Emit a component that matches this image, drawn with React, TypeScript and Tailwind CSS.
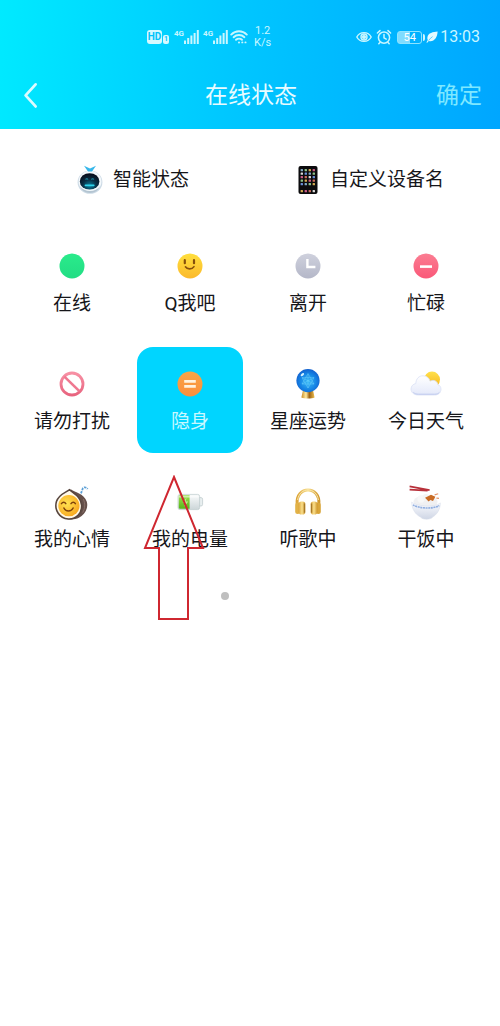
import type { ReactNode } from 'react';
import { useState } from 'react';
import clsx from 'clsx';

const fontClass = "font-[Roboto,'Noto_Sans_CJK_SC',sans-serif]";

function SignalBars() {
    return (
        <svg viewBox="0 0 15 14" className="w-[15px] h-[14px]" fill="currentColor">
            <rect x="0" y="10.5" width="2" height="3.5" />
            <rect x="3.2" y="8" width="2" height="6" />
            <rect x="6.4" y="5.5" width="2" height="8.5" />
            <rect x="9.6" y="3" width="2" height="11" />
            <rect x="12.8" y="0" width="2" height="14" />
        </svg>
    );
}

function Signal() {
    return (
        <div className="flex items-end">
            <span className="self-start text-[8px] leading-[8px] font-bold">4G</span>
            <SignalBars />
        </div>
    );
}

function StatusBar() {
    return (
        <div className="flex items-center justify-between h-[50px] pl-[147px] pr-5 text-[#c9f6ff]">
            <div className="flex items-center">
                <span className="w-[15px] rounded-[3px] bg-[#d6f9ff] text-[#00c3fb] text-[10px] leading-[14px] font-bold text-center">HD</span>
                <span className="ml-px mt-1 w-[6px] rounded-[2px] bg-[#d6f9ff] text-[#00c3fb] text-[7px] leading-[9px] font-bold text-center">1</span>
                <div className="flex items-center gap-1 ml-[5px]">
                    <Signal />
                    <Signal />
                </div>
                <svg viewBox="0 0 18 16" className="w-[18px] h-4 ml-0.5" fill="none" stroke="currentColor" strokeWidth="1.9" strokeLinecap="round">
                    <path d="M1.2 5.6C5.6 1.2 12.4 1.2 16.8 5.6" />
                    <path d="M3.6 8.2c3-2.9 7.8-2.9 10.8 0" />
                    <path d="M6 10.8c1.7-1.6 4.3-1.6 6 0" />
                    <circle cx="9" cy="13.4" r="1" fill="currentColor" stroke="none" />
                    <path d="M12.2 13.4h.2M15.4 13.4h.2" />
                </svg>
                <div className="ml-1.5 text-[11px] leading-3 text-center">
                    <div>1.2</div>
                    <div>K/s</div>
                </div>
            </div>
            <div className="flex items-center">
                <svg viewBox="0 0 16 12" className="w-4 h-3" fill="none" stroke="currentColor" strokeWidth="1.4">
                    <path d="M.8 6C3.8.2 12.2.2 15.2 6 12.2 11.8 3.8 11.8.8 6Z" />
                    <circle cx="8" cy="6" r="3" />
                    <circle cx="8" cy="6" r="1.4" fill="currentColor" />
                </svg>
                <svg viewBox="0 0 16 16" className="w-4 h-4 ml-1" fill="none" stroke="currentColor" strokeWidth="1.5" strokeLinecap="round">
                    <circle cx="8" cy="8.6" r="5.6" />
                    <path d="M8 5.6v3.2l2.2 1.4M1.4 4 4 1.6M14.6 4 12 1.6M4 13.4l-1.2 1.4M12 13.4l1.2 1.4" />
                </svg>
                <div className="flex items-center ml-[5px]">
                    <span className="w-[25px] border border-[#8ee4ff] rounded-[3px] bg-linear-to-r from-[#7fdcff] from-54% to-transparent to-54% text-[11px] leading-[11px] text-center text-white">54</span>
                    <span className="w-0.5 h-[7px] ml-px rounded-r-sm bg-current" />
                </div>
                <svg viewBox="0 0 12 12" className="w-3 h-3 ml-px mr-0.5" fill="#e2faff">
                    <path d="M11.6.6C7 .8 2.2 2.2 1.4 6.200c-.2 1 0 2 .4 2.800L.4 11.400l.8.4L2.800 10c4.800 1.400 8.600-2.800 8.800-9.400Z" />
                    <path d="M2.600 9.600C3.800 7.800 5 6.600 6.600 5.600" stroke="#0db2fb" strokeWidth=".6" fill="none" />
                </svg>
                <span className="text-base leading-5">13:03</span>
            </div>
        </div>
    );
}

function RobotIcon() {
    return (
        <svg viewBox="0 0 26 30" className="w-[26px] h-[30px]">
            <defs>
                <radialGradient id="robotScreen" cx=".5" cy=".75" r=".7">
                    <stop offset="0" stopColor="#0b7f9c" />
                    <stop offset=".5" stopColor="#092f45" />
                    <stop offset="1" stopColor="#070d1c" />
                </radialGradient>
            </defs>
            <ellipse cx="13" cy="17.2" rx="12.400" ry="11.600" fill="#cddbe6" />
            <ellipse cx="13" cy="16.400" rx="11.400" ry="10.600" fill="#f3f8fb" />
            <path d="M3 21c4 6.600 16 6.600 20 0-3 9.200-17 9.200-20 0Z" fill="#b3c4d1" />
            <ellipse cx="12.600" cy="16.400" rx="9.800" ry="8.200" fill="url(#robotScreen)" />
            <path d="M8.600 14.600c.6-1.200 1.800-1.200 2.400 0M14.400 14.600c.6-1.200 1.800-1.200 2.400 0" stroke="#1c8fa8" strokeWidth="1.100" fill="none" />
            <path d="M8.400 20.400h8.400" stroke="#2fd3ea" strokeWidth="1.600" strokeLinecap="round" />
            <path d="M7 .8 13 3.400 19 .8 15 6.600h-4Z" fill="#37b7ea" />
        </svg>
    );
}

function PhoneIcon() {
    const colors = ['#7fa7c4', '#c86b5b', '#8fc28a', '#d8d8d8', '#d2a950', '#6a8fd8', '#c95a86'];
    return (
        <svg viewBox="0 0 20 30" className="w-5 h-[30px]">
            <rect x=".5" y="1" width="19" height="28" rx="2" fill="#0b0b0d" />
            {[0, 1, 2, 3, 4, 6].map((row) =>
                [0, 1, 2, 3].map((col) => (
                    <rect
                        key={`${row}-${col}`}
                        x={2.6 + col * 4}
                        y={4 + row * 3.5}
                        width="2.4"
                        height="2.2"
                        rx=".5"
                        fill={colors[(row * 3 + col * 2) % colors.length]}
                    />
                ))
            )}
        </svg>
    );
}

function Icon({ children }: { children: ReactNode }) {
    return (
        <svg viewBox="0 0 40 40" className="w-10 h-10" fill="none">
            {children}
        </svg>
    );
}

function Gradient({ id, from, to }: { id: string; from: string; to: string }) {
    return (
        <linearGradient id={id} x1="0" y1="0" x2="0" y2="1">
            <stop offset="0" stopColor={from} />
            <stop offset="1" stopColor={to} />
        </linearGradient>
    );
}

const OnlineIcon = (
    <Icon>
        <Gradient id="online" from="#2aeb8b" to="#22dd84" />
        <circle cx="20" cy="20" r="12.5" fill="url(#online)" />
    </Icon>
);

const SmileIcon = (
    <Icon>
        <Gradient id="smile" from="#ffdf3d" to="#fbb92c" />
        <circle cx="20" cy="20" r="12.5" fill="url(#smile)" />
        <path d="M14.800 14.200v3M24 14.200v3" stroke="#85500c" strokeWidth="2.200" strokeLinecap="round" />
        <path d="M15.400 20.800c1.800 2.800 6.600 2.800 8.600-.2" stroke="#85500c" strokeWidth="1.600" strokeLinecap="round" />
    </Icon>
);

const AwayIcon = (
    <Icon>
        <Gradient id="away" from="#cfd1dd" to="#b4b7c8" />
        <circle cx="20" cy="20" r="12.500" fill="url(#away)" />
        <path d="M19.400 13v8H27.400" stroke="#fff" strokeWidth="2.400" />
    </Icon>
);

const BusyIcon = (
    <Icon>
        <Gradient id="busy" from="#fb7d92" to="#fa5878" />
        <circle cx="20" cy="20" r="12.500" fill="url(#busy)" />
        <path d="M14 20.600h12" stroke="#fff" strokeWidth="2.600" />
    </Icon>
);

const NoDisturbIcon = (
    <Icon>
        <Gradient id="disturb" from="#f790a4" to="#e8647f" />
        <circle cx="20" cy="20" r="11" stroke="url(#disturb)" strokeWidth="2.800" />
        <path d="M12.400 12.600 27.600 27.400" stroke="#ef7890" strokeWidth="2.600" />
    </Icon>
);

const InvisibleIcon = (
    <Icon>
        <Gradient id="invisible" from="#f9a545" to="#fb8f3d" />
        <circle cx="20" cy="20" r="12.500" fill="url(#invisible)" />
        <path d="M14.200 17.400h11.600M14.200 22.400h11.600" stroke="#fff3df" strokeWidth="2.600" />
    </Icon>
);

const CrystalIcon = (
    <Icon>
        <defs>
            <radialGradient id="crystal" cx=".5" cy=".55" r=".55">
                <stop offset="0" stopColor="#39b8f6" />
                <stop offset=".6" stopColor="#1687e6" />
                <stop offset="1" stopColor="#1260cf" />
            </radialGradient>
            <linearGradient id="crystalBase" x1="0" y1="0" x2="1" y2="0">
                <stop offset="0" stopColor="#c98b22" />
                <stop offset=".35" stopColor="#ffe9a0" />
                <stop offset=".6" stopColor="#9c6214" />
                <stop offset="1" stopColor="#f0c04e" />
            </linearGradient>
        </defs>
        <path d="M15 26h10l1.600 7.400c-3 1.400-10.200 1.400-13.200 0Z" fill="url(#crystalBase)" />
        <circle cx="20" cy="16.600" r="11.600" fill="url(#crystal)" />
        <path d="M20 9.600 26 20h-12ZM20 24l-6-10.400h12ZM20 9.600V24M14 13.600l12 6.400M26 13.600 14 20" stroke="#7fdcff" strokeWidth=".6" opacity=".6" />
        <ellipse cx="14.400" cy="10.600" rx="2" ry="1.200" transform="rotate(-40 14.400 10.600)" fill="#d4f2ff" />
    </Icon>
);

const WeatherIcon = (
    <Icon>
        <Gradient id="sun" from="#ffe04a" to="#f7b51b" />
        <Gradient id="cloud" from="#ffffff" to="#e4e9fa" />
        <circle cx="26" cy="15.600" r="8" fill="url(#sun)" />
        <path
            d="M12.200 31C7.800 31 5 28.400 5 25c0-3 2.200-5 4.800-5.400C10 14.600 13 11.800 17 11.800c3.600 0 6.200 2 7 5.400 1-.6 2-.8 3-.8 2.800 0 4.600 1.800 4.800 4.200 2 .6 3.200 2.400 3.200 4.600 0 3.400-2.600 5.800-6.200 5.800Z"
            fill="url(#cloud)"
            stroke="#dbe1f5"
            strokeWidth=".8"
        />
        <path d="M7.400 28.400c1.400 1.400 3 1.800 5 1.800h16.400c2 0 3.600-.6 4.600-1.800" stroke="#bfcaee" strokeWidth="1" />
    </Icon>
);

const MoodIcon = (
    <Icon>
        <defs>
            <radialGradient id="mood" cx=".4" cy=".4" r=".7">
                <stop offset="0" stopColor="#ffe352" />
                <stop offset="1" stopColor="#f8a31c" />
            </radialGradient>
        </defs>
        <g transform="translate(-2 2.500) scale(1.040)">
            <path d="M20 4.600c3 2.600 13 4 15.400 12 1.800 6.600-2.200 12.400-7.600 15.400-3.600 1.800-9 2.200-13.400.6Z" fill="#65504b" />
            <path d="M32 14c2 4.200 1.800 9-.6 13" stroke="#8b746b" strokeWidth=".9" />
            <path d="M18.600 5c-2.400 2.400-10 4-12.400 11.400C4 24 8.600 32.600 17.600 33.200c8.200.4 13.200-6 12.800-13.400C30 12 23 8.800 18.600 5Z" fill="#fff8e7" stroke="#58463f" strokeWidth="1.500" />
            <circle cx="18.200" cy="20.400" r="10.200" fill="url(#mood)" />
            <path d="M11 18.400c1.200-1.800 3.200-1.800 4.200 0M20.200 18.400c1.200-1.800 3.200-1.800 4.200 0M13.400 22.600c1.600 3.800 7 3.800 8.800 0" stroke="#80430b" strokeWidth="1.400" strokeLinecap="round" />
        </g>
        <path d="m29 11.400 1.800-5c1-1.400 3-1.600 4.800.6" stroke="#5b9fd6" strokeWidth="1.800" strokeDasharray="2.400 1" />
    </Icon>
);

const BatteryIcon = (
    <Icon>
        <Gradient id="charge" from="#9de04b" to="#55b81b" />
        <Gradient id="shell" from="#fafcfc" to="#ccd6d8" />
        <rect x="28" y="15.600" width="4.600" height="8.400" rx="1.600" fill="#e9eff0" stroke="#bcc8ca" strokeWidth=".7" />
        <rect x="8" y="12.400" width="21.600" height="15.200" rx="2" fill="url(#shell)" stroke="#bccacb" strokeWidth=".7" />
        <path d="M10 13.200h9.600v13.600H10c-.8 0-1.200-.4-1.200-1.200V14.400c0-.8.4-1.200 1.200-1.200Z" fill="url(#charge)" />
        <path d="M9 14.800h19.600" stroke="#fff" strokeWidth="1.400" opacity=".6" />
        <path d="m16.600 15.400-4 5h2.600l-1 4.400 4-5.400h-2.600Z" fill="#c5ec94" />
    </Icon>
);

const MusicIcon = (
    <Icon>
        <defs>
            <linearGradient id="gold" x1="0" y1="0" x2="1" y2="0">
                <stop offset="0" stopColor="#dca439" />
                <stop offset=".5" stopColor="#f9df8c" />
                <stop offset="1" stopColor="#cf962b" />
            </linearGradient>
        </defs>
        <path d="M9.200 22C7.400 3.200 32.600 3.200 30.800 22" stroke="url(#gold)" strokeWidth="3" />
        <path d="M9.600 18c2-13.400 18.800-13.400 20.800 0" stroke="#f8e6ae" strokeWidth="1" />
        <rect x="7.200" y="20.400" width="5" height="11.600" rx="2.500" fill="#e2b247" />
        <rect x="10.600" y="19.600" width="6.800" height="13" rx="2.800" fill="url(#gold)" />
        <path d="M16.400 21.400v9.400" stroke="#a87b28" strokeWidth="1.200" />
        <rect x="27.800" y="20.400" width="5" height="11.600" rx="2.500" fill="#d9a539" />
        <rect x="22.600" y="19.600" width="6.800" height="13" rx="2.800" fill="url(#gold)" />
        <path d="M23.600 21.400v9.400" stroke="#a87b28" strokeWidth="1.200" />
    </Icon>
);

const RiceIcon = (
    <Icon>
        <Gradient id="bowl" from="#fbfcff" to="#cfd6e5" />
        <g transform="translate(-1 2.500)">
            <ellipse cx="20.500" cy="17.400" rx="12" ry="6.600" fill="#f0f0f2" />
            <circle cx="16" cy="14.400" r="3.600" fill="#f7f7f7" />
            <circle cx="21" cy="12.800" r="3.400" fill="#f4f4f4" />
            <path d="M6.600 17.600c4 4 22.800 6 28.800.8-.2 7-3.600 11.600-7.800 14.200-.6 2.400-10.200 3-11.800.2C10.400 30 7 25 6.600 17.600Z" fill="url(#bowl)" stroke="#d5dbe8" strokeWidth=".5" />
            <path d="M8 20.400c5.600 3.600 20.400 4.400 26.200.6" stroke="#90aee0" strokeWidth="1.600" strokeDasharray="2 .6" />
            <path d="m20 13.200 6-3 4.400 2-2.400 4.400-2.600-1-1.800 1.400Z" fill="#c96b24" />
            <path d="m29.600 10.400 3.600-1.200M31.400 13.600l2.600.2" stroke="#e4956c" strokeWidth="1.200" />
        </g>
        <path d="m3.600 4.400 20 3.800M3.600 7.600l18 1" stroke="#b8303a" strokeWidth="1.800" />
    </Icon>
);

const statuses = [
    { label: '在线', icon: OnlineIcon },
    { label: 'Q我吧', icon: SmileIcon },
    { label: '离开', icon: AwayIcon },
    { label: '忙碌', icon: BusyIcon },
    { label: '请勿打扰', icon: NoDisturbIcon },
    { label: '隐身', icon: InvisibleIcon },
    { label: '星座运势', icon: CrystalIcon },
    { label: '今日天气', icon: WeatherIcon },
    { label: '我的心情', icon: MoodIcon },
    { label: '我的电量', icon: BatteryIcon, pointer: true },
    { label: '听歌中', icon: MusicIcon },
    { label: '干饭中', icon: RiceIcon },
];

// Red outline arrow pointing up at the tile above
function PointerArrow() {
    return (
        <svg viewBox="0 0 62 156" className="absolute left-[6px] top-[10px] w-[62px] h-[156px] pointer-events-none" fill="none">
            <path d="M31 2 60 73H45v71H16V73H2Z" stroke="#cf2730" strokeWidth="2" />
        </svg>
    );
}

export default function App() {
    const [selected, setSelected] = useState('隐身');

    return (
        <div className={clsx('min-h-screen bg-white text-[#16161a]', fontClass)}>
            <header className="pt-3 bg-linear-[95deg,#00eaff_0%,#00c6ff_48%,#00a6ff_100%]">
                <StatusBar />
                <div className="grid grid-cols-3 items-center h-[67px] pl-5 pr-[18px] text-[23px] leading-8 text-white">
                    <button type="button" aria-label="返回" className="justify-self-start">
                        <svg viewBox="0 0 20 28" className="w-5 h-7" fill="none" stroke="#dcfbff" strokeWidth="2.800" strokeLinecap="round" strokeLinejoin="round">
                            <path d="M15.600 2.400 5.600 13.400l10 11" />
                        </svg>
                    </button>
                    <h1 className="text-center text-[#e8fbff]">在线状态</h1>
                    <button type="button" className="justify-self-end text-[#7fe8ff]">确定</button>
                </div>
            </header>

            <main>
                <div className="grid grid-cols-2 h-[100px] pl-3.5 pr-2.5 pt-0.5 text-[19px] leading-6">
                    <button type="button" className="flex items-center justify-center gap-2.5">
                        <RobotIcon />
                        智能状态
                    </button>
                    <button type="button" className="flex items-center justify-center gap-3">
                        <PhoneIcon />
                        自定义设备名
                    </button>
                </div>

                <div className="grid grid-cols-4 gap-3 pl-[19px] pr-[21px]">
                    {statuses.map(({ label, icon, pointer }) => (
                        <div key={label} className="relative">
                            <button
                                type="button"
                                aria-pressed={selected === label}
                                onClick={() => setSelected(label)}
                                className={clsx(
                                    'flex flex-col items-center gap-1.5 w-full h-[106px] pt-[17px] rounded-2xl text-[19px] leading-6 whitespace-nowrap',
                                    selected === label && 'bg-[#00d5ff] text-[#c8f8ff]'
                                )}
                            >
                                {icon}
                                {label}
                            </button>
                            {pointer && <PointerArrow />}
                        </div>
                    ))}
                </div>

                <div className="flex justify-center mt-[21px] pr-[50px]">
                    <span className="w-2 h-2 rounded-full bg-[#bfbfbf]" />
                </div>
            </main>
        </div>
    );
}
